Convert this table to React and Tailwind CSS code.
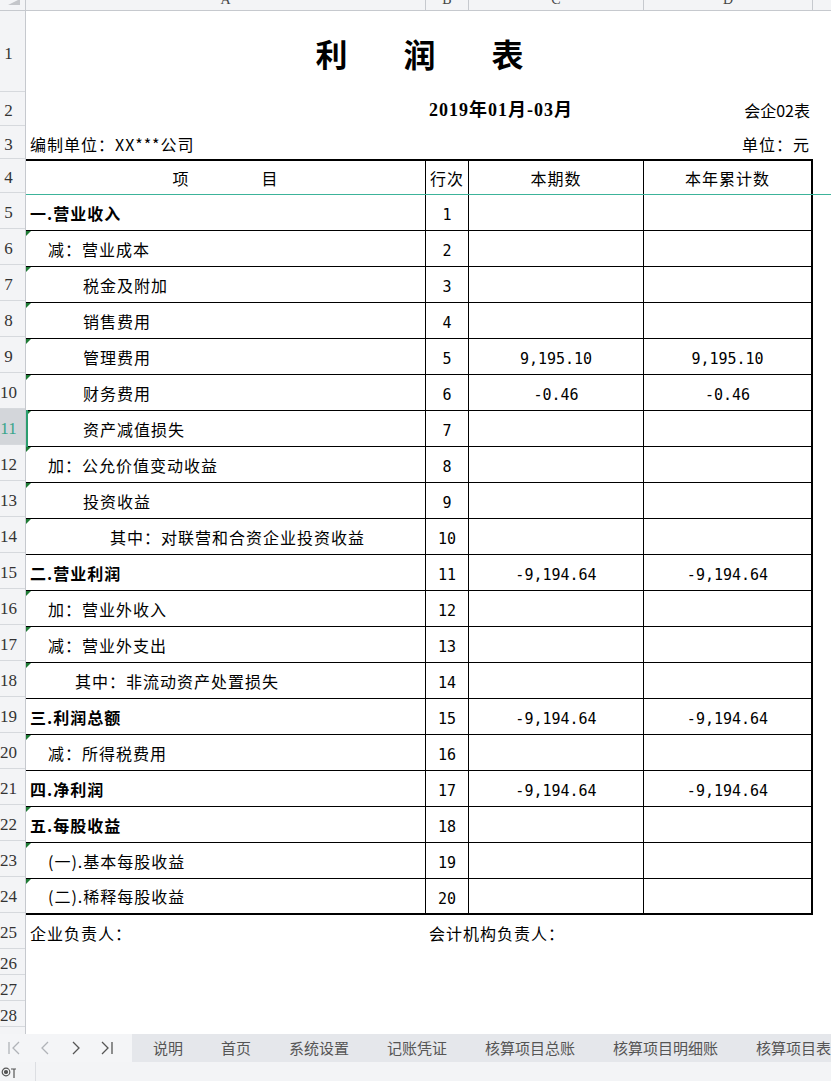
import React from 'react';

const rows = [
    { no: 1, item: '一.营业收入', bold: true, pad: 'pl-[4px]' },
    { no: 2, item: '减：营业成本', pad: 'pl-[22px]', mark: true },
    { no: 3, item: '税金及附加', pad: 'pl-[57px]', mark: true },
    { no: 4, item: '销售费用', pad: 'pl-[57px]', mark: true },
    { no: 5, item: '管理费用', pad: 'pl-[57px]', mark: true, cur: '9,195.10', ytd: '9,195.10' },
    { no: 6, item: '财务费用', pad: 'pl-[57px]', mark: true, cur: '-0.46', ytd: '-0.46' },
    { no: 7, item: '资产减值损失', pad: 'pl-[57px]', mark: true, selected: true },
    { no: 8, item: '加：公允价值变动收益', pad: 'pl-[22px]', mark: true },
    { no: 9, item: '投资收益', pad: 'pl-[57px]', mark: true },
    { no: 10, item: '其中：对联营和合资企业投资收益', pad: 'pl-[84px]', mark: true },
    { no: 11, item: '二.营业利润', bold: true, pad: 'pl-[4px]', cur: '-9,194.64', ytd: '-9,194.64' },
    { no: 12, item: '加：营业外收入', pad: 'pl-[22px]', mark: true },
    { no: 13, item: '减：营业外支出', pad: 'pl-[22px]', mark: true },
    { no: 14, item: '其中：非流动资产处置损失', pad: 'pl-[49px]', mark: true },
    { no: 15, item: '三.利润总额', bold: true, pad: 'pl-[4px]', cur: '-9,194.64', ytd: '-9,194.64' },
    { no: 16, item: '减：所得税费用', pad: 'pl-[22px]', mark: true },
    { no: 17, item: '四.净利润', bold: true, pad: 'pl-[4px]', cur: '-9,194.64', ytd: '-9,194.64' },
    { no: 18, item: '五.每股收益', bold: true, pad: 'pl-[4px]', mark: true },
    { no: 19, item: '(一).基本每股收益', pad: 'pl-[22px]', mark: true },
    { no: 20, item: '(二).稀释每股收益', pad: 'pl-[22px]', mark: true },
];

// row header heights, rows 1..28
const rowHeights = [81, 34, 33, 34, ...Array(20).fill(36), 36, 26, 26, 26];

const tabs = ['说明', '首页', '系统设置', '记账凭证', '核算项目总账', '核算项目明细账', '核算项目表'];

const numCell = "flex items-center justify-center pt-[6px] font-['DejaVu_Sans_Mono',monospace] text-[15px]";

function Marker() {
    return (
        <svg className="absolute left-0 top-0" width="5" height="5" viewBox="0 0 5 5">
            <polygon points="0,0 5,0 0,5" fill="#1e7b34" />
        </svg>
    );
}

function NavIcon({ kind, color }) {
    return (
        <svg width="16" height="16" viewBox="0 0 16 16" fill="none" stroke={color} strokeWidth="1.3">
            {kind === 'first' && <><path d="M3 2v12" /><path d="M13 2L7 8l6 6" /></>}
            {kind === 'prev' && <path d="M11 2L5 8l6 6" />}
            {kind === 'next' && <path d="M5 2l6 6-6 6" />}
            {kind === 'last' && <><path d="M3 2l6 6-6 6" /><path d="M13 2v12" /></>}
        </svg>
    );
}

function TableRow({ row, last }) {
    return (
        <div className={last ? 'flex h-[34px]' : 'flex h-[36px] border-b border-black'}>
            <div className={`relative flex w-[400px] items-center border-r border-black tracking-[1px] ${row.pad} ${row.bold ? 'font-bold' : ''}`}>
                {row.mark && <Marker />}
                {row.selected && <div className="absolute bottom-[-1px] left-0 top-[-1px] w-[2px] bg-[#2a9d6e]" />}
                {row.item}
            </div>
            <div className={`${numCell} w-[43px] border-r border-black`}>{row.no}</div>
            <div className={`${numCell} w-[175px] border-r border-black`}>{row.cur}</div>
            <div className={`${numCell} flex-1`}>{row.ytd}</div>
        </div>
    );
}

export default function App() {
    return (
        <div className="relative flex h-[1081px] w-[831px] flex-col overflow-hidden bg-white font-['Noto_Sans_CJK_SC',sans-serif] text-[16px] text-black">
            {/* column header */}
            <div className="flex h-[11px] shrink-0 overflow-hidden border-b border-[#c6c9ce] bg-[#f3f4f6] font-['Liberation_Serif',serif] text-[14px] leading-none text-[#444]">
                <div className="relative w-[26px] border-r border-[#c6c9ce]">
                    <svg className="absolute left-[8px] top-[-1px]" width="12" height="6" viewBox="0 0 12 6">
                        <polygon points="0,6 12,0 12,6" fill="#c4c6ca" />
                    </svg>
                </div>
                <div className="-mt-[7px] w-[400px] border-r border-[#c6c9ce] text-center">A</div>
                <div className="-mt-[7px] w-[43px] border-r border-[#c6c9ce] text-center">B</div>
                <div className="-mt-[7px] w-[175px] border-r border-[#c6c9ce] text-center">C</div>
                <div className="-mt-[7px] w-[169px] border-r border-[#c6c9ce] text-center">D</div>
                <div className="flex-1" />
            </div>

            <div className="flex min-h-0 flex-1 overflow-hidden">
                {/* row header */}
                <div className="flex w-[26px] shrink-0 flex-col border-r border-[#c6c9ce] bg-[#f3f4f6] font-['Liberation_Serif',serif] text-[17px] text-[#333]">
                    {rowHeights.map((h, i) => (
                        <div
                            key={i}
                            style={{ height: h }}
                            className={`flex shrink-0 items-center justify-center border-b border-[#d6d9dd] pr-[8px] pt-[5px] ${i === 10 ? 'bg-[#d3d6da] text-[#3aa58a]' : ''}`}
                        >
                            {i + 1}
                        </div>
                    ))}
                    <div className="flex-1" />
                </div>

                {/* sheet */}
                <div className="flex min-w-0 flex-1 flex-col">
                    <div className="flex h-[81px] w-[787px] shrink-0 items-center justify-center gap-[56px] pt-[3px] text-[32px] font-bold">
                        <span>利</span><span>润</span><span>表</span>
                    </div>
                    <div className="flex h-[34px] w-[787px] shrink-0 items-end pb-[2px]">
                        <div className="w-[400px]" />
                        <div className="w-[218px] pl-[3px] font-['Liberation_Serif','Noto_Sans_CJK_SC',serif] text-[18px] font-bold tracking-[1px]">2019年01月-03月</div>
                        <div className="flex-1 pb-[2px] pr-[3px] text-right">会企02表</div>
                    </div>
                    <div className="flex h-[33px] w-[787px] shrink-0 items-end pb-[3px]">
                        <div className="w-[400px] pl-[4px] tracking-[1px]">编制单位：XX***公司</div>
                        <div className="flex-1 pr-[3px] text-right tracking-[1px]">单位：元</div>
                    </div>

                    <div className="w-[787px] shrink-0 border-y-2 border-r-2 border-black">
                        <div className="flex h-[34px] tracking-[1px]">
                            <div className="flex w-[400px] items-center justify-center gap-[72px] border-r border-black"><span>项</span><span>目</span></div>
                            <div className="flex w-[43px] items-center justify-center border-r border-black">行次</div>
                            <div className="flex w-[175px] items-center justify-center border-r border-black">本期数</div>
                            <div className="flex flex-1 items-center justify-center">本年累计数</div>
                        </div>
                        {rows.map((row, i) => (
                            <TableRow key={row.no} row={row} last={i === rows.length - 1} />
                        ))}
                    </div>

                    <div className="flex h-[36px] shrink-0 items-center tracking-[1px]">
                        <div className="w-[400px] pl-[4px]">企业负责人：</div>
                        <div className="pl-[3px]">会计机构负责人：</div>
                    </div>
                </div>
            </div>

            {/* freeze line */}
            <div className="absolute left-[26px] right-0 top-[194px] h-px bg-[#3cb39a]" />

            {/* sheet tabs */}
            <div className="flex h-[28px] shrink-0 items-center overflow-hidden bg-[#e5e7eb] text-[15px] text-[#555]">
                <div className="flex h-full w-[132px] shrink-0 items-center gap-[15px] bg-[#f4f5f7] pl-[6px]">
                    <NavIcon kind="first" color="#b0b3b8" />
                    <NavIcon kind="prev" color="#b0b3b8" />
                    <NavIcon kind="next" color="#555" />
                    <NavIcon kind="last" color="#555" />
                </div>
                <div className="flex shrink-0 whitespace-nowrap pl-[2px]">
                    {tabs.map((t) => (
                        <div key={t} className="px-[19px]">{t}</div>
                    ))}
                </div>
            </div>

            {/* status bar */}
            <div className="flex h-[19px] shrink-0 items-center bg-[#f3f4f6]">
                <svg className="ml-[1px]" width="16" height="14" viewBox="0 0 16 14" fill="none" stroke="#555" strokeWidth="1.2">
                    <circle cx="5" cy="7" r="3.8" />
                    <circle cx="5" cy="7" r="1.5" fill="#555" />
                    <path d="M10 4h5M13 4v9" />
                </svg>
                <div className="ml-[18px] h-full w-px bg-[#dcdee2]" />
            </div>
        </div>
    );
}
